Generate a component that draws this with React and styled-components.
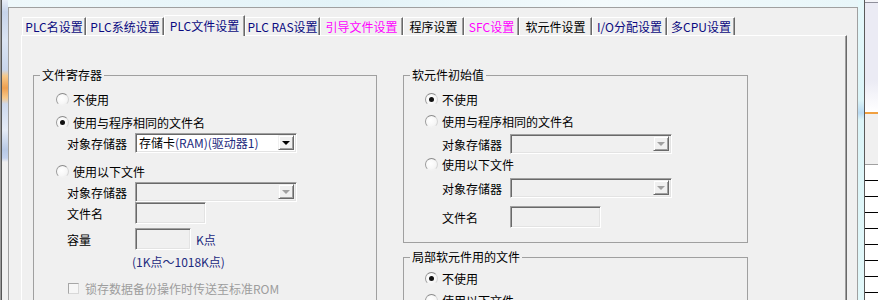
import React from "react";
import styled, { createGlobalStyle } from "styled-components";

const GlobalStyle = createGlobalStyle`
  html, body { margin: 0; padding: 0; background: #f0f0f0; }
  body {
    font-family: "Noto Sans CJK SC", "Noto Sans", sans-serif;
    font-size: 12px;
    color: #000;
  }
`;

const NAVY = "#0a0a80";
const PINK = "#ff00ff";

const tabs = [
  { label: "PLC名设置", w: 64, color: NAVY },
  { label: "PLC系统设置", w: 78, color: NAVY },
  { label: "PLC文件设置", w: 81, color: NAVY, active: true },
  { label: "PLC RAS设置", w: 75, color: NAVY },
  { label: "引导文件设置", w: 83, color: PINK },
  { label: "程序设置", w: 61, color: "#000" },
  { label: "SFC设置", w: 55, color: PINK },
  { label: "软元件设置", w: 73, color: "#000" },
  { label: "I/O分配设置", w: 75, color: NAVY },
  { label: "多CPU设置", w: 68, color: NAVY },
];

export default function App() {
  return (
    <>
      <GlobalStyle />
      <Screen>
        <LeftEdge />
        <CenterCol>
          <Backdrop />
          <Dialog>
            <TabRow>
              {tabs.map((t) => (
                <Tab key={t.label} $w={t.w} $color={t.color} $active={t.active}>
                  {t.label}
                </Tab>
              ))}
            </TabRow>
            <Page>
              {/* 文件寄存器 */}
              <Group $w={344} $h={262}>
                <Legend>文件寄存器</Legend>
                <Body $pl={22}>
                  <Row $mt={6}>
                    <Radio />
                    不使用
                  </Row>
                  <Row $mt={3}>
                    <Radio $on />
                    使用与程序相同的文件名
                  </Row>
                  <Row $mt={1} $indent={11}>
                    <FieldLabel>对象存储器</FieldLabel>
                    <Combo>
                      <ComboText>
                        存储卡<Tint>(RAM)(驱动器1)</Tint>
                      </ComboText>
                      <DropBtn />
                    </Combo>
                  </Row>
                  <Row $mt={8}>
                    <Radio />
                    使用以下文件
                  </Row>
                  <Row $mt={1} $indent={11}>
                    <FieldLabel>对象存储器</FieldLabel>
                    <Combo $disabled>
                      <ComboText />
                      <DropBtn $disabled />
                    </Combo>
                  </Row>
                  <Row $h={22} $indent={11}>
                    <FieldLabel>文件名</FieldLabel>
                    <TextBox $w={71} />
                  </Row>
                  <Row $mt={4} $h={22} $indent={11}>
                    <FieldLabel>容量</FieldLabel>
                    <TextBox $w={56} />
                    <Unit>K点</Unit>
                  </Row>
                  <Row $mt={3} $h={16} $indent={76}>
                    <Tint>(1K点～1018K点)</Tint>
                  </Row>
                  <Row $mt={11} $h={16} $indent={12}>
                    <CheckBox />
                    <Disabled>锁存数据备份操作时传送至标准ROM</Disabled>
                  </Row>
                </Body>
              </Group>

              <RightCol>
                {/* 软元件初始值 */}
                <Group $w={345}>
                  <Legend>软元件初始值</Legend>
                  <Body $pl={21} $pb={14}>
                    <Row $mt={6}>
                      <Radio $on />
                      不使用
                    </Row>
                    <Row $mt={2}>
                      <Radio />
                      使用与程序相同的文件名
                    </Row>
                    <Row $mt={3} $indent={17}>
                      <FieldLabel>对象存储器</FieldLabel>
                      <Combo $disabled>
                        <ComboText />
                        <DropBtn $disabled />
                      </Combo>
                    </Row>
                    <Row>
                      <Radio />
                      使用以下文件
                    </Row>
                    <Row $mt={4} $indent={17}>
                      <FieldLabel>对象存储器</FieldLabel>
                      <Combo $disabled>
                        <ComboText />
                        <DropBtn $disabled />
                      </Combo>
                    </Row>
                    <Row $mt={8} $h={22} $indent={17}>
                      <FieldLabel>文件名</FieldLabel>
                      <TextBox $w={91} />
                    </Row>
                  </Body>
                </Group>

                {/* 局部软元件用的文件 */}
                <Group $w={345} $mt={6} $h={80}>
                  <Legend>局部软元件用的文件</Legend>
                  <Body $pl={21}>
                    <Row $mt={3}>
                      <Radio $on />
                      不使用
                    </Row>
                    <Row $mt={2}>
                      <Radio />
                      使用以下文件
                    </Row>
                  </Body>
                </Group>
              </RightCol>
            </Page>
          </Dialog>
        </CenterCol>
        <CyanStrip />
        <SideWin>
          <SideTop />
          <SideMid />
          <SideList />
        </SideWin>
      </Screen>
    </>
  );
}

const Screen = styled.div`
  display: flex;
  width: 878px;
  height: 300px;
  overflow: hidden;
`;

const LeftEdge = styled.div`
  width: 8px;
  flex: none;
  box-sizing: border-box;
  border-left: 1px solid #9a9a9a;
  box-shadow: inset 1px 0 0 #555;
  background: linear-gradient(
    to bottom,
    #e9eef7 0,
    #c7d4ea 12px,
    #dbe4f2 40px,
    #c9d6ec 70px,
    #f7c98a 76px,
    #f0a050 88px,
    #f7c98a 98px,
    #cdd9ee 104px,
    #e6ecf6 130px,
    #b8c9e6 150px,
    #c4d2ee 158px,
    #f0f0f0 162px,
    #f0f0f0 100%
  );
`;

const CenterCol = styled.div`
  width: 850px;
  flex: none;
  display: flex;
  flex-direction: column;
`;

const Backdrop = styled.div`
  height: 7px;
  flex: none;
  background: linear-gradient(to right, #eef8fb, #e3f3f8 40%, #f3fafc 70%, #e8f6f9);
`;

const Dialog = styled.div`
  flex: 1;
  box-sizing: border-box;
  border: 1px solid #a0a0a0;
  border-bottom: none;
  background: #f0f0f0;
  padding: 7px 10px 0 12px;
  min-height: 0;
`;

const TabRow = styled.div`
  display: flex;
  align-items: flex-end;
  height: 20px;
  padding-left: 1px;
  position: relative;
  z-index: 1;
`;

const Tab = styled.div`
  box-sizing: border-box;
  width: ${(p) => p.$w}px;
  height: ${(p) => (p.$active ? 21 : 18)}px;
  margin-bottom: ${(p) => (p.$active ? -1 : 0)}px;
  padding-bottom: ${(p) => (p.$active ? 2 : 0)}px;
  border-top: 1px solid #fff;
  border-left: 1px solid #fff;
  border-right: 1px solid #696969;
  box-shadow: inset -1px 0 0 #a0a0a0;
  background: #f0f0f0;
  color: ${(p) => p.$color};
  display: flex;
  align-items: center;
  justify-content: center;
  white-space: nowrap;
  flex: none;
`;

const Page = styled.div`
  box-sizing: border-box;
  width: 826px;
  height: 290px;
  border-top: 1px solid #fff;
  border-left: 1px solid #fff;
  border-right: 1px solid #696969;
  box-shadow: inset -1px 0 0 #a0a0a0;
  padding: 31px 0 0 11px;
  display: flex;
  gap: 26px;
  align-items: flex-start;
`;

const RightCol = styled.div`
  display: flex;
  flex-direction: column;
`;

const Group = styled.fieldset`
  box-sizing: border-box;
  width: ${(p) => p.$w}px;
  min-width: 0;
  height: ${(p) => (p.$h ? `${p.$h}px` : "auto")};
  margin: ${(p) => p.$mt || 0}px 0 0 0;
  padding: 0;
  border: 1px solid #a0a0a0;
`;

const Legend = styled.legend`
  margin-left: 6px;
  padding: 0 2px;
  font-size: 12px;
  line-height: 16px;
`;

const Body = styled.div`
  display: flex;
  flex-direction: column;
  padding: 0 0 ${(p) => p.$pb || 0}px ${(p) => p.$pl}px;
`;

const Row = styled.div`
  display: flex;
  align-items: center;
  height: ${(p) => p.$h || 20}px;
  margin-top: ${(p) => p.$mt || 0}px;
  padding-left: ${(p) => p.$indent || 0}px;
  white-space: nowrap;
`;

const Radio = styled.span`
  width: 13px;
  height: 13px;
  box-sizing: border-box;
  border-radius: 50%;
  flex: none;
  margin-right: 4px;
  border: 1px solid;
  border-color: #8a8a8a #d4d4d4 #f2f2f2 #9a9a9a;
  background: radial-gradient(circle at 40% 40%, #fff 0, #f6f6f6 60%, #e4e4e4 100%);
  display: flex;
  align-items: center;
  justify-content: center;
  &::after {
    content: "";
    width: 5px;
    height: 5px;
    border-radius: 50%;
    background: ${(p) => (p.$on ? "#111" : "transparent")};
  }
`;

const FieldLabel = styled.span`
  width: 68px;
  flex: none;
`;

const Combo = styled.div`
  box-sizing: border-box;
  width: 162px;
  height: 20px;
  flex: none;
  display: flex;
  align-items: stretch;
  border: 1px solid;
  border-color: #a0a0a0 #fff #fff #a0a0a0;
  box-shadow: inset 1px 1px 0 #696969, inset -1px -1px 0 #e3e3e3;
  background: ${(p) => (p.$disabled ? "#f0f0f0" : "#fff")};
  padding: 1px 2px 2px 1px;
`;

const ComboText = styled.span`
  flex: 1;
  padding-left: 2px;
  line-height: 16px;
  white-space: nowrap;
  overflow: hidden;
`;

const DropBtn = styled.span`
  width: 16px;
  flex: none;
  box-sizing: border-box;
  border: 1px solid;
  border-color: #f0f0f0 #696969 #696969 #f0f0f0;
  box-shadow: inset 1px 1px 0 #fff, inset -1px -1px 0 #a0a0a0;
  background: #f0f0f0;
  display: flex;
  align-items: center;
  justify-content: center;
  &::after {
    content: "";
    border-left: 4px solid transparent;
    border-right: 4px solid transparent;
    border-top: 4px solid ${(p) => (p.$disabled ? "#a0a0a0" : "#000")};
  }
`;

const TextBox = styled.div`
  box-sizing: border-box;
  width: ${(p) => p.$w}px;
  height: 22px;
  flex: none;
  border: 1px solid;
  border-color: #a0a0a0 #fff #fff #a0a0a0;
  box-shadow: inset 1px 1px 0 #696969, inset -1px -1px 0 #e3e3e3;
  background: #f0f0f0;
`;

const Tint = styled.span`
  color: #1c2a7e;
`;

const Unit = styled(Tint)`
  margin-left: 5px;
`;

const CheckBox = styled.span`
  width: 11px;
  height: 11px;
  box-sizing: border-box;
  flex: none;
  margin-right: 6px;
  border: 1px solid;
  border-color: #a6a6a6 #d8d8d8 #d8d8d8 #a6a6a6;
  background: #f6f6f6;
`;

const Disabled = styled.span`
  color: #9d9d9d;
`;

const CyanStrip = styled.div`
  width: 6px;
  flex: none;
  background: linear-gradient(
    to bottom,
    #e6f9fb 0,
    #dcf5f8 100px,
    #b9daf2 113px,
    #dcf5f8 120px,
    #e2f8fa 100%
  );
`;

const SideWin = styled.div`
  width: 14px;
  flex: none;
  box-sizing: border-box;
  border-left: 1px solid #5a5a5a;
  display: flex;
  flex-direction: column;
  background: #f0f0f0;
`;

const SideTop = styled.div`
  height: 112px;
  flex: none;
  border-bottom: 2px solid #f0a040;
  background: linear-gradient(
    to bottom,
    #f4f4f8 0,
    #f4f4f8 2px,
    #8f8f9a 2px,
    #8f8f9a 3px,
    #ebebf4 3px,
    #ebebf4 80px,
    #fbfbfd 105px,
    #fff 112px
  );
`;

const SideMid = styled.div`
  height: 50px;
  flex: none;
  background: #f0f0f0;
  border-bottom: 1px solid #a0a0a0;
`;

const SideList = styled.div`
  flex: 1;
  background: repeating-linear-gradient(to bottom, #fff 0, #fff 15px, #000 15px, #000 16px);
`;
